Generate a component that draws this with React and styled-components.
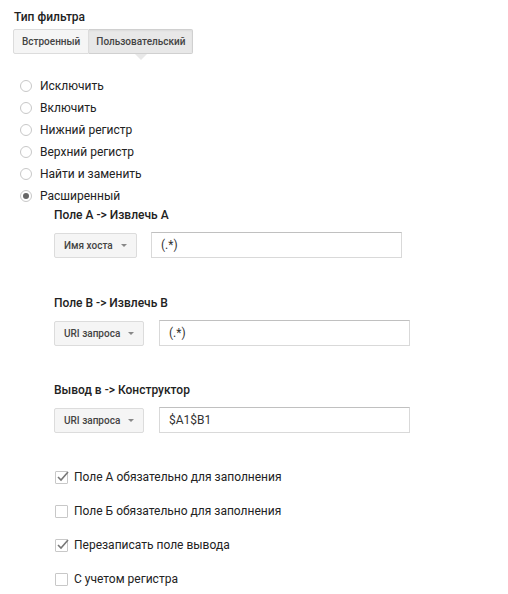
import React from 'react';
import styled, { createGlobalStyle } from 'styled-components';

const GlobalStyle = createGlobalStyle`
    body {
        margin: 0;
        background: #fff;
        font-family: Roboto, "Liberation Sans", Arial, sans-serif;
        color: #222;
    }
`;

const Page = styled.div`
    padding: 9px 0 0 13px;
    width: 495px;
    height: 585px;
    display: flex;
    flex-direction: column;
`;

const Title = styled.div`
    font-size: 12px;
    font-weight: 500;
    line-height: 16px;
    margin-left: 1px;
    color: #222;
`;

const TabGroup = styled.div`
    display: flex;
    margin-top: 4px;
`;

const Tab = styled.div`
    position: relative;
    height: 23px;
    padding: 0 ${p => p.$pad}px;
    display: flex;
    align-items: center;
    font-size: 10px;
    font-weight: 500;
    color: #444;
    background: ${p => (p.$active ? '#e8e8e8' : '#f5f5f5')};
    border: 1px solid ${p => (p.$active ? '#d0d0d0' : '#dcdcdc')};
    border-left-width: ${p => (p.$first ? 1 : 0)}px;
    border-radius: ${p => (p.$first ? '2px 0 0 2px' : '0 2px 2px 0')};
    box-shadow: ${p => (p.$active ? 'inset 0 1px 2px rgba(0,0,0,0.06)' : 'none')};

    &::after {
        content: '';
        display: ${p => (p.$active ? 'block' : 'none')};
        position: absolute;
        left: 50%;
        bottom: -7px;
        margin-left: -6px;
        border-left: 6px solid transparent;
        border-right: 6px solid transparent;
        border-top: 6px solid #e8e8e8;
    }
`;

const RadioList = styled.div`
    display: flex;
    flex-direction: column;
    margin-top: 21px;
    margin-left: 7px;
`;

const RadioRow = styled.label`
    display: flex;
    align-items: center;
    height: 22px;
    font-size: 12px;
    color: #222;
    gap: 8px;
`;

const RadioCircle = styled.span`
    width: 10px;
    height: 10px;
    border: 1px solid #c8c8c8;
    border-radius: 50%;
    display: flex;
    align-items: center;
    justify-content: center;
    background: #fff;

    &::after {
        content: '';
        display: ${p => (p.$checked ? 'block' : 'none')};
        width: 6px;
        height: 6px;
        border-radius: 50%;
        background: #666;
    }
`;

const Advanced = styled.div`
    display: flex;
    flex-direction: column;
    margin-left: 41px;
`;

const Section = styled.div`
    display: flex;
    flex-direction: column;
    margin-top: ${p => p.$top}px;
`;

const FieldLabel = styled.div`
    font-size: 12px;
    font-weight: 500;
    line-height: 16px;
    color: #222;
`;

const FieldRow = styled.div`
    display: flex;
    align-items: center;
    gap: ${p => p.$gap}px;
    margin-top: 9px;
`;

const Select = styled.div`
    box-sizing: border-box;
    width: ${p => p.$w}px;
    height: 25px;
    display: flex;
    align-items: center;
    justify-content: space-between;
    padding: 0 9px 0 9px;
    background: #f5f5f5;
    border: 1px solid #dcdcdc;
    border-radius: 2px;
    font-size: 10px;
    font-weight: 500;
    color: #444;
`;

const Caret = styled.span`
    width: 0;
    height: 0;
    border-left: 3px solid transparent;
    border-right: 3px solid transparent;
    border-top: 3px solid #888;
    margin-top: 1px;
`;

const TextInput = styled.div`
    box-sizing: border-box;
    width: 251px;
    height: 26px;
    display: flex;
    align-items: center;
    padding: 0 9px;
    border: 1px solid #d9d9d9;
    border-top-color: #c0c0c0;
    background: #fff;
    font-size: 12px;
    color: #333;
`;

const CheckList = styled.div`
    display: flex;
    flex-direction: column;
    margin-top: 37px;
    gap: 20px;
    margin-left: 1px;
`;

const CheckRow = styled.label`
    display: flex;
    align-items: center;
    height: 14px;
    gap: 6px;
    font-size: 12px;
    color: #222;
`;

const Box = styled.span`
    position: relative;
    width: 11px;
    height: 11px;
    border: 1px solid #c8c8c8;
    border-radius: 1px;
    background: #fff;
    flex: none;
`;

const Tick = styled.svg`
    position: absolute;
    left: 0;
    top: -2px;
`;

function Radio({ label, checked }) {
    return (
        <RadioRow>
            <RadioCircle $checked={checked} />
            {label}
        </RadioRow>
    );
}

function Checkbox({ label, checked }) {
    return (
        <CheckRow>
            <Box>
                {checked && (
                    <Tick width="14" height="13" viewBox="0 0 14 13">
                        <path d="M2 7 L5 10 L12 2" fill="none" stroke="#777" strokeWidth="1.6" />
                    </Tick>
                )}
            </Box>
            {label}
        </CheckRow>
    );
}

const fields = [
    { label: 'Поле A -> Извлечь A', select: 'Имя хоста', w: 83, gap: 14, value: '(.*)', top: 0 },
    { label: 'Поле B -> Извлечь B', select: 'URI запроса', w: 90, gap: 15, value: '(.*)', top: 37 },
    { label: 'Вывод в -> Конструктор', select: 'URI запроса', w: 90, gap: 15, value: '$A1$B1', top: 36 },
];

function App() {
    return (
        <Page>
            <GlobalStyle />
            <Title>Тип фильтра</Title>
            <TabGroup>
                <Tab $first $pad={8}>Встроенный</Tab>
                <Tab $active $pad={7}>Пользовательский</Tab>
            </TabGroup>
            <RadioList>
                <Radio label="Исключить" />
                <Radio label="Включить" />
                <Radio label="Нижний регистр" />
                <Radio label="Верхний регистр" />
                <Radio label="Найти и заменить" />
                <Radio label="Расширенный" checked />
            </RadioList>
            <Advanced>
                {fields.map(f => (
                    <Section key={f.label} $top={f.top}>
                        <FieldLabel>{f.label}</FieldLabel>
                        <FieldRow $gap={f.gap}>
                            <Select $w={f.w}>
                                {f.select}
                                <Caret />
                            </Select>
                            <TextInput>{f.value}</TextInput>
                        </FieldRow>
                    </Section>
                ))}
                <CheckList>
                    <Checkbox label="Поле A обязательно для заполнения" checked />
                    <Checkbox label="Поле Б обязательно для заполнения" />
                    <Checkbox label="Перезаписать поле вывода" checked />
                    <Checkbox label="С учетом регистра" />
                </CheckList>
            </Advanced>
        </Page>
    );
}

export default App;
